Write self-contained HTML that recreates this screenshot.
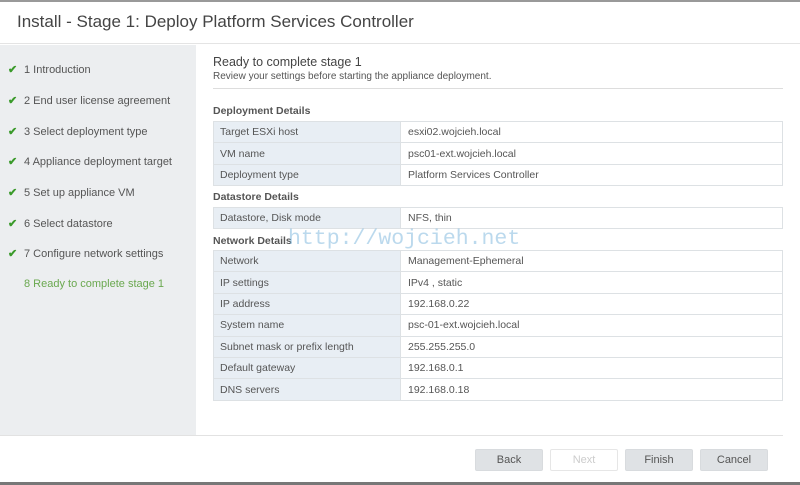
<!DOCTYPE html>
<html><head><style>
*{margin:0;padding:0;box-sizing:border-box}
body{width:800px;height:485px;overflow:hidden;background:#fff;font-family:"Liberation Sans",sans-serif;position:relative;color:#333}
.top{position:absolute;left:0;top:0;width:800px;height:2px;background:#999}
.hdr{position:absolute;left:0;top:2px;width:800px;height:42px;border-bottom:1px solid #e4e4e4}
.hdr span{position:absolute;left:17px;top:10px;font-size:17px;color:#444}
.side{position:absolute;left:0;top:45px;width:196px;height:390px;background:#eceef0}
.step{position:absolute;left:8px;font-size:11px;color:#555}
.step i{display:inline-block;width:12px;color:#3a9a2a;font-style:normal;font-weight:bold;margin-right:4px}
.cur{color:#6aa84f}
.t1{position:absolute;left:213px;top:55px;font-size:12.5px;color:#444}
.t2{position:absolute;left:213px;top:71px;font-size:10px;color:#555}
.sep{position:absolute;left:213px;top:88px;width:570px;height:1px;background:#ddd}
.h{position:absolute;left:213px;font-size:10.5px;font-weight:bold;color:#555}
table{position:absolute;left:213px;width:570px;border-collapse:collapse;font-size:10.5px;color:#555}
td{border:1px solid #dde1e4;height:21.4px;padding:0 0 0 6px}
td:first-child{width:187px;background:#e8eef4}
td:last-child{padding-left:7px}
.wm{position:absolute;left:288px;top:227px;font-family:"Liberation Mono",monospace;font-size:21.5px;color:rgba(120,180,220,.5)}
.bsep{position:absolute;left:0;top:435px;width:783px;height:1px;background:#e2e2e2}
.btn{position:absolute;top:449px;width:68px;height:22px;background:#dfe2e5;border:1px solid #d8dbde;font-size:11px;color:#555;text-align:center;line-height:20px;border-radius:2px}
.bot{position:absolute;left:0;top:482px;width:800px;height:3px;background:#777}
</style></head><body>
<div class="top"></div>
<div class="hdr"><span>Install - Stage 1: Deploy Platform Services Controller</span></div>
<div class="side">
<div class="step" style="top:18px"><i>✔</i>1 Introduction</div>
<div class="step" style="top:49px"><i>✔</i>2 End user license agreement</div>
<div class="step" style="top:80px"><i>✔</i>3 Select deployment type</div>
<div class="step" style="top:110px"><i>✔</i>4 Appliance deployment target</div>
<div class="step" style="top:141px"><i>✔</i>5 Set up appliance VM</div>
<div class="step" style="top:172px"><i>✔</i>6 Select datastore</div>
<div class="step" style="top:202px"><i>✔</i>7 Configure network settings</div>
<div class="step cur" style="top:233px"><i></i>8 Ready to complete stage 1</div>
</div>
<div class="t1">Ready to complete stage 1</div>
<div class="t2">Review your settings before starting the appliance deployment.</div>
<div class="sep"></div>
<div class="h" style="top:105px">Deployment Details</div>
<table style="top:121px">
<tr><td>Target ESXi host</td><td>esxi02.wojcieh.local</td></tr>
<tr><td>VM name</td><td>psc01-ext.wojcieh.local</td></tr>
<tr><td>Deployment type</td><td>Platform Services Controller</td></tr>
</table>
<div class="h" style="top:191px">Datastore Details</div>
<table style="top:207px">
<tr><td>Datastore, Disk mode</td><td>NFS, thin</td></tr>
</table>
<div class="h" style="top:235px">Network Details</div>
<table style="top:250px">
<tr><td>Network</td><td>Management-Ephemeral</td></tr>
<tr><td>IP settings</td><td>IPv4 , static</td></tr>
<tr><td>IP address</td><td>192.168.0.22</td></tr>
<tr><td>System name</td><td>psc-01-ext.wojcieh.local</td></tr>
<tr><td>Subnet mask or prefix length</td><td>255.255.255.0</td></tr>
<tr><td>Default gateway</td><td>192.168.0.1</td></tr>
<tr><td>DNS servers</td><td>192.168.0.18</td></tr>
</table>
<div class="wm">http://wojcieh.net</div>
<div class="bsep"></div>
<div class="btn" style="left:475px">Back</div>
<div class="btn" style="left:550px;background:#fff;color:#ccc;border-color:#e6e6e6">Next</div>
<div class="btn" style="left:625px">Finish</div>
<div class="btn" style="left:700px">Cancel</div>
<div class="bot"></div>
</body></html>
